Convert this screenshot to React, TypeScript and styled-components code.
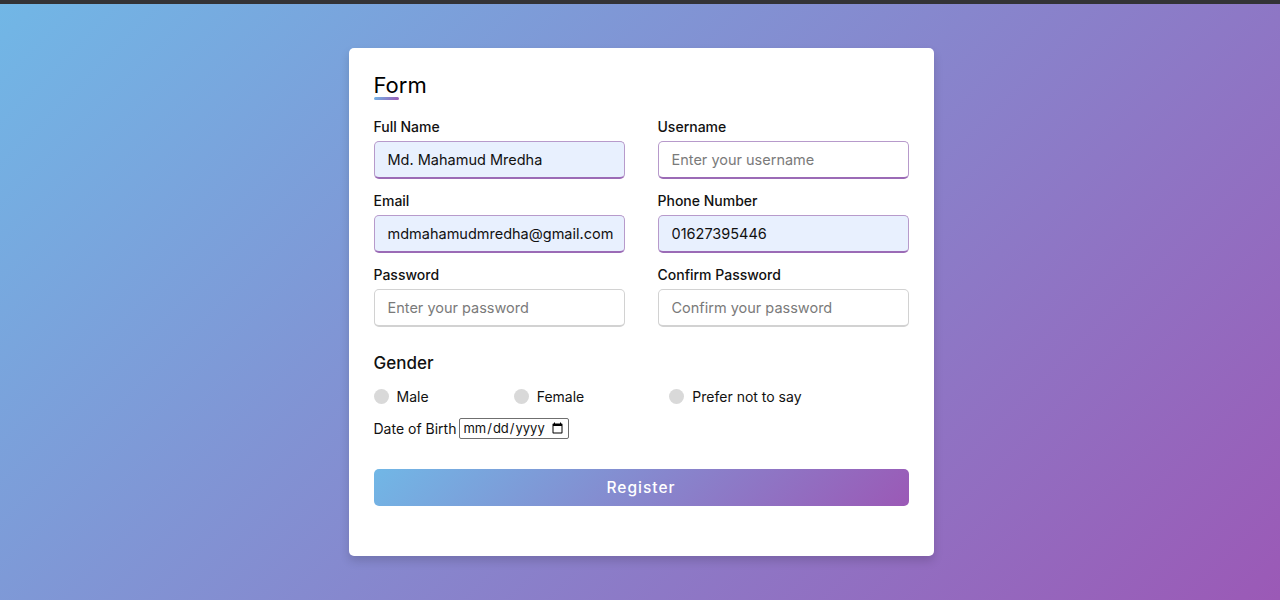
import React from "react";
import styled, { createGlobalStyle } from "styled-components";

const Global = createGlobalStyle`
  * { box-sizing: border-box; }
  html, body { margin: 0; padding: 0; }
  body {
    min-height: 100vh;
    border-top: 4px solid #333336;
    background: linear-gradient(135deg, #71b7e6, #9b59b6);
    font-family: "Inter", "Open Sans", sans-serif;
  }
`;

const Page = styled.div`
  min-height: calc(100vh - 4px);
  display: flex;
  align-items: center;
  justify-content: center;
  padding-left: 2px;
`;

const Card = styled.div`
  width: 585px;
  background: #fff;
  border-radius: 5px;
  padding: 25px 25px 50px;
  box-shadow: 0 5px 10px rgba(0, 0, 0, 0.15);
`;

const Title = styled.div`
  position: relative;
  font-size: 22px;
  line-height: 24px;
  font-weight: 400;
  color: #000;
  height: 27px;
  &::after {
    content: "";
    position: absolute;
    left: 0;
    bottom: 0;
    width: 25px;
    height: 3px;
    border-radius: 2px;
    background: linear-gradient(135deg, #71b7e6, #9b59b6);
  }
`;

const Grid = styled.div`
  display: grid;
  grid-template-columns: 1fr 1fr;
  column-gap: 33px;
  row-gap: 12px;
  margin-top: 17px;
`;

const Field = styled.div`
  display: flex;
  flex-direction: column;
  gap: 4px;
`;

const Label = styled.label`
  font-size: 14px;
  line-height: 20px;
  font-weight: 500;
  color: #111;
`;

const Input = styled.input<{ $active?: boolean; $filled?: boolean }>`
  height: 38px;
  width: 100%;
  border-radius: 5px;
  border: 1px solid ${(p) => (p.$active ? "#b79acb" : "#d2d2d2")};
  border-bottom: 2px solid ${(p) => (p.$active ? "#9b6bb6" : "#d2d2d2")};
  background: ${(p) => (p.$filled ? "#e8f0fe" : "#fff")};
  padding: 0 0 0 13px;
  font-family: inherit;
  font-size: 14.5px;
  color: #111;
  outline: none;
  &::placeholder { color: #7a7a7a; }
`;

const Gender = styled.div`
  margin-top: 24px;
  font-size: 17px;
  line-height: 24px;
  font-weight: 500;
  color: #111;
`;

const Category = styled.div`
  display: flex;
  width: 80%;
  justify-content: space-between;
  margin-top: 9px;
  height: 24px;
  align-items: center;
`;

const Option = styled.label`
  display: flex;
  align-items: center;
  gap: 8px;
  font-size: 14px;
  color: #111;
`;

const Dot = styled.span`
  width: 15px;
  height: 15px;
  border-radius: 50%;
  background: #d9d9d9;
`;

const DobRow = styled.div`
  display: flex;
  align-items: center;
  margin-top: 8px;
  font-size: 14px;
  color: #111;
  height: 24px;
`;

const DateInput = styled.input`
  font-family: inherit;
  font-size: 13px;
  height: 21px;
  width: 110px;
  margin-left: 3px;
  padding: 0 2px;
  border: 1px solid #6f6f6f;
  border-radius: 2px;
  color: #111;
`;

const Button = styled.button`
  margin-top: 29px;
  width: 100%;
  height: 37px;
  border: none;
  border-radius: 5px;
  background: linear-gradient(135deg, #71b7e6, #9b59b6);
  color: #fff;
  font-family: inherit;
  font-size: 15.5px;
  font-weight: 500;
  letter-spacing: 1px;
`;

const fields = [
  { label: "Full Name", value: "Md. Mahamud Mredha", ph: "", active: true, filled: true },
  { label: "Username", value: "", ph: "Enter your username", active: true, filled: false },
  { label: "Email", value: "mdmahamudmredha@gmail.com", ph: "", active: true, filled: true },
  { label: "Phone Number", value: "01627395446", ph: "", active: true, filled: true },
  { label: "Password", value: "", ph: "Enter your password", active: false, filled: false },
  { label: "Confirm Password", value: "", ph: "Confirm your password", active: false, filled: false },
];

export default function App() {
  return (
    <>
      <Global />
      <Page>
        <Card>
          <Title>Form</Title>
          <Grid>
            {fields.map((f) => (
              <Field key={f.label}>
                <Label>{f.label}</Label>
                <Input
                  $active={f.active}
                  $filled={f.filled}
                  defaultValue={f.value}
                  placeholder={f.ph}
                />
              </Field>
            ))}
          </Grid>
          <Gender>Gender</Gender>
          <Category>
            <Option><Dot />Male</Option>
            <Option><Dot />Female</Option>
            <Option><Dot />Prefer not to say</Option>
          </Category>
          <DobRow>
            Date of Birth
            <DateInput type="date" />
          </DobRow>
          <Button>Register</Button>
        </Card>
      </Page>
    </>
  );
}
